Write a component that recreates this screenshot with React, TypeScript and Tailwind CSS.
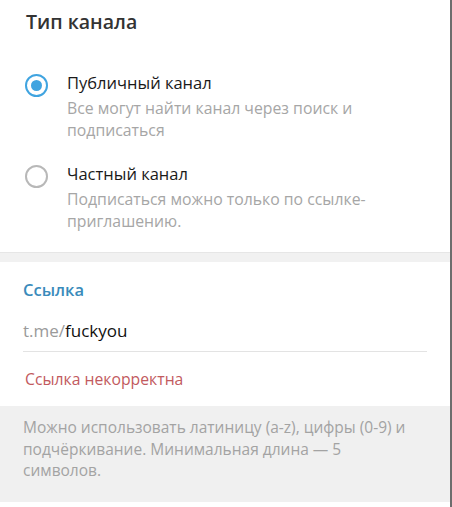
import React, { useState } from 'react';

const font = { fontFamily: '"Open Sans", "Noto Sans", sans-serif' };

interface RadioOptionProps {
  checked: boolean;
  label: string;
  description: string;
  onSelect: () => void;
}

function RadioOption({ checked, label, description, onSelect }: RadioOptionProps) {
  return (
    <button type="button" onClick={onSelect} className="flex w-full text-left">
      <div className="w-[67px] shrink-0 pl-[25px] pt-[2px]">
        <div
          className={
            checked
              ? 'w-[23px] h-[23px] rounded-full border-2 border-[#40a4e0] flex items-center justify-center'
              : 'w-[23px] h-[23px] rounded-full border-2 border-[#b8b8b8]'
          }
        >
          {checked && <div className="w-[11px] h-[11px] rounded-full bg-[#40a4e0]" />}
        </div>
      </div>
      <div className="flex-1 pr-[60px]">
        <div className="text-[16.5px] leading-[22px] text-[#1a1a1a]">{label}</div>
        <div className="mt-[3px] text-[15.8px] leading-[22px] text-[#a6a6a6]">{description}</div>
      </div>
    </button>
  );
}

export default function App() {
  const [type, setType] = useState<'public' | 'private'>('public');

  return (
    <div className="w-[452px] h-[507px] flex bg-white" style={font}>
      <div className="w-[450px] flex flex-col">
        {/* Channel type */}
        <div className="pt-[8px] pb-[20px]">
          <div className="flex">
            <div className="w-6 shrink-0" />
            <h2 className="ml-0.5 text-[19.5px] leading-[27px] font-semibold text-[#333333]">
              Тип канала
            </h2>
          </div>
          <div className="mt-[37px] flex flex-col gap-[22px]">
            <RadioOption
              checked={type === 'public'}
              label="Публичный канал"
              description="Все могут найти канал через поиск и подписаться"
              onSelect={() => setType('public')}
            />
            <RadioOption
              checked={type === 'private'}
              label="Частный канал"
              description="Подписаться можно только по ссылке-приглашению."
              onSelect={() => setType('private')}
            />
          </div>
        </div>

        {/* Divider band */}
        <div className="h-[10px] bg-[#f1f1f1] border-t border-[#e6e6e6]" />

        {/* Link */}
        <div className="px-[23px] pt-[17px] pb-[16px]">
          <div className="text-[16.5px] leading-[22px] font-semibold text-[#3a8bbb]">Ссылка</div>
          <div className="mt-[19px] pb-[9px] border-b border-[#e3e3e3] text-[17px] leading-[22px]">
            <span className="text-[#9a9a9a]">t.me/</span>
            <span className="text-[#111111]">fuckyou</span>
          </div>
          <div className="mt-[16px] pl-[2px] text-[15.75px] leading-[22px] text-[#c25a5e]">
            Ссылка некорректна
          </div>
        </div>

        {/* Hint */}
        <div className="bg-[#f0f0f0] pl-[23px] pr-[34px] pt-[11px] pb-[20px] text-[15.5px] leading-[21.5px] text-[#a3a3a3]">
          Можно использовать латиницу (a-z), цифры (0-9) и подчёркивание. Минимальная длина — 5
          символов.
        </div>
        <div className="flex-1 bg-white" />
      </div>
      <div className="w-[2px] bg-[#6d6d6d]" />
    </div>
  );
}
